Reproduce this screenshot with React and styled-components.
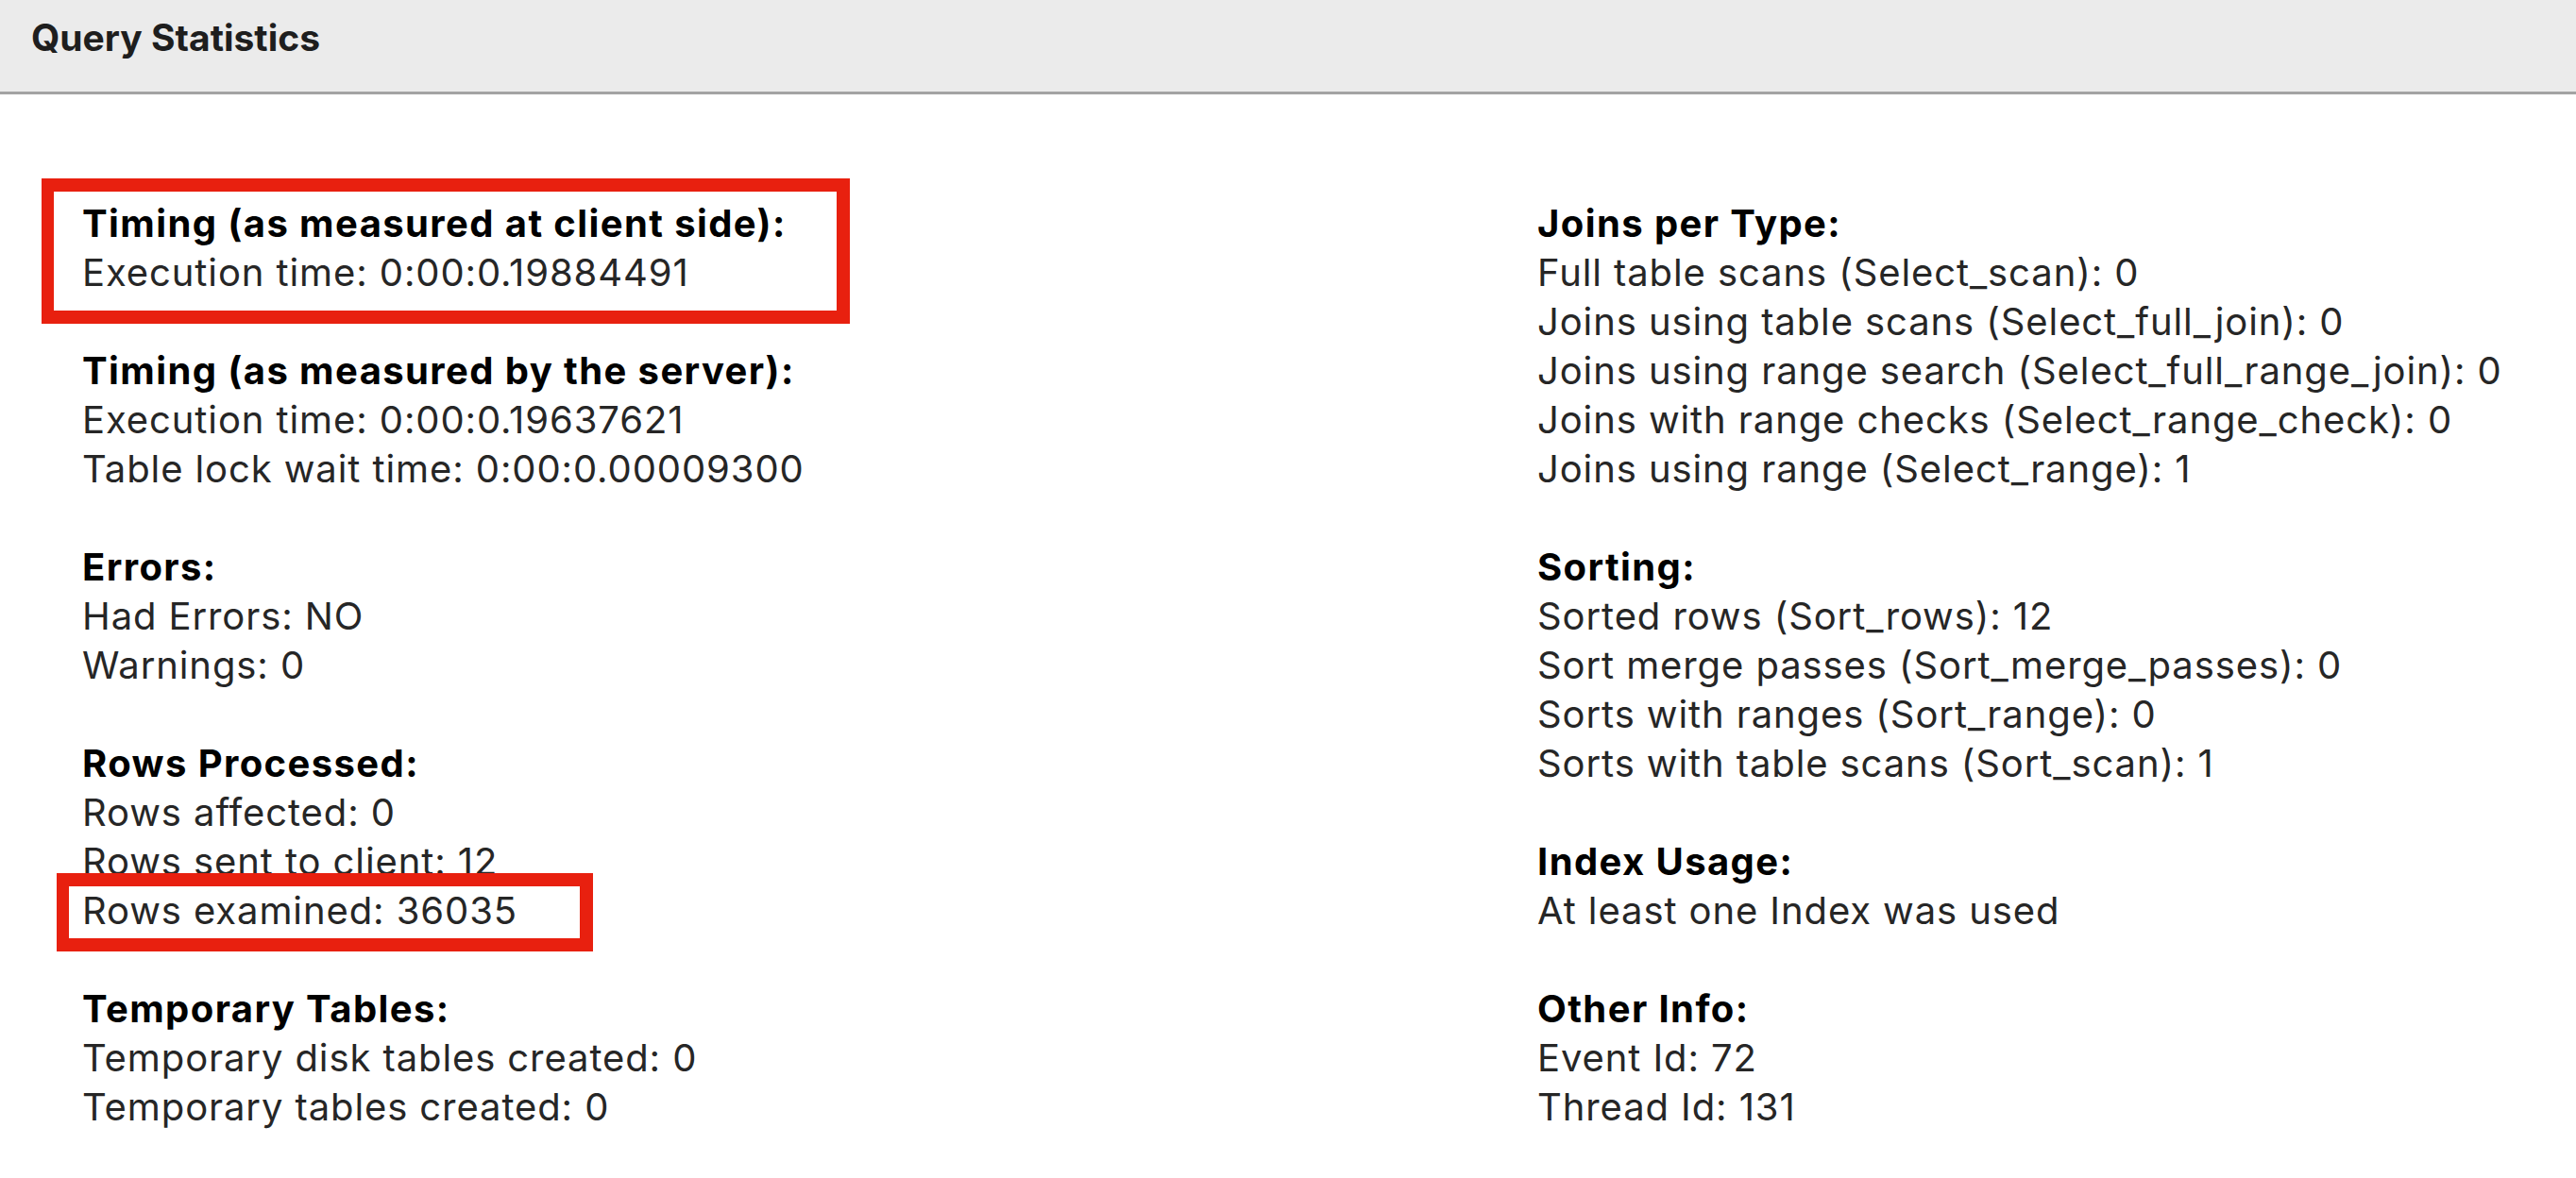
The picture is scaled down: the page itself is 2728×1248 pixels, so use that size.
import React from 'react';
import styled, { createGlobalStyle } from 'styled-components';

// # GLOBAL
const GlobalStyle = createGlobalStyle`
    html, body {
        margin: 0;
        padding: 0;
        background: #ffffff;
    }
    body {
        font-family: Inter, "Liberation Sans", Arial, sans-serif;
    }
`;

// # STYLED
const Page = styled.div`
    width: 2728px;
    height: 1248px;
    background: #ffffff;
    overflow: hidden;
`;
const Header = styled.header`
    box-sizing: border-box;
    height: 100px;
    background: #ebebeb;
    border-bottom: 3px solid #a3a3a3;
    padding: 16px 0 0 33px;
`;
const Title = styled.h1`
    margin: 0;
    font-size: 39px;
    line-height: normal;
    font-weight: 700;
    color: #1e1e1e;
`;
const Columns = styled.div`
    display: grid;
    grid-template-columns: 1541px 1fr;
    padding: 111px 0 0 87px;
`;
const Column = styled.div`
    display: flex;
    flex-direction: column;
    gap: 52px;
`;
const Section = styled.section`
    display: flex;
    flex-direction: column;
`;
const Heading = styled.h2`
    margin: 0;
    font-size: 40px;
    line-height: 52px;
    letter-spacing: 1.4px;
    font-weight: 700;
    color: #000000;
    white-space: nowrap;
`;
const Line = styled.div`
    font-size: 40px;
    line-height: 52px;
    letter-spacing: 0.9px;
    color: #262626;
    white-space: nowrap;
`;
const Marked = styled.div`
    box-sizing: border-box;
    width: ${p => p.$width}px;
    border: 14px solid #e8200f;
    border-left-width: 13px;
    border-right-width: 14px;
    margin: ${p => -p.$top}px 0 ${p => -p.$bottom}px ${p => -p.$left}px;
    padding: ${p => p.$top - 14}px 0 ${p => p.$bottom - 14}px ${p => p.$left - 13}px;
`;

// # DATA
const left = [
    { title: 'Timing (as measured at client side):', lines: ['Execution time: 0:00:0.19884491'], mark: { width: 856, top: 22, bottom: 28, left: 43 } },
    { title: 'Timing (as measured by the server):', lines: ['Execution time: 0:00:0.19637621', 'Table lock wait time: 0:00:0.00009300'] },
    { title: 'Errors:', lines: ['Had Errors: NO', 'Warnings: 0'] },
    { title: 'Rows Processed:', lines: ['Rows affected: 0', 'Rows sent to client: 12', 'Rows examined: 36035'], markLast: { width: 568, top: 14, bottom: 17, left: 27 } },
    { title: 'Temporary Tables:', lines: ['Temporary disk tables created: 0', 'Temporary tables created: 0'] },
];
const right = [
    { title: 'Joins per Type:', lines: [
        'Full table scans (Select_scan): 0',
        'Joins using table scans (Select_full_join): 0',
        'Joins using range search (Select_full_range_join): 0',
        'Joins with range checks (Select_range_check): 0',
        'Joins using range (Select_range): 1',
    ] },
    { title: 'Sorting:', lines: [
        'Sorted rows (Sort_rows): 12',
        'Sort merge passes (Sort_merge_passes): 0',
        'Sorts with ranges (Sort_range): 0',
        'Sorts with table scans (Sort_scan): 1',
    ] },
    { title: 'Index Usage:', lines: ['At least one Index was used'] },
    { title: 'Other Info:', lines: ['Event Id: 72', 'Thread Id: 131'] },
];

// # COMPONENT
function StatSection({ section }) {
    const body = (
        <>
            <Heading>{section.title}</Heading>
            {section.lines.map((text, i) => {
                const last = i === section.lines.length - 1;
                if (last && section.markLast) {
                    const m = section.markLast;
                    return (
                        <Marked key={text} $width={m.width} $top={m.top} $bottom={m.bottom} $left={m.left}>
                            <Line>{text}</Line>
                        </Marked>
                    );
                }
                return <Line key={text}>{text}</Line>;
            })}
        </>
    );
    if (section.mark) {
        const m = section.mark;
        return (
            <Section>
                <Marked $width={m.width} $top={m.top} $bottom={m.bottom} $left={m.left}>{body}</Marked>
            </Section>
        );
    }
    return <Section>{body}</Section>;
}

export default function App() {
    return (
        <Page>
            <GlobalStyle />
            <Header>
                <Title>Query Statistics</Title>
            </Header>
            <Columns>
                <Column>
                    {left.map(s => <StatSection key={s.title} section={s} />)}
                </Column>
                <Column>
                    {right.map(s => <StatSection key={s.title} section={s} />)}
                </Column>
            </Columns>
        </Page>
    );
}
